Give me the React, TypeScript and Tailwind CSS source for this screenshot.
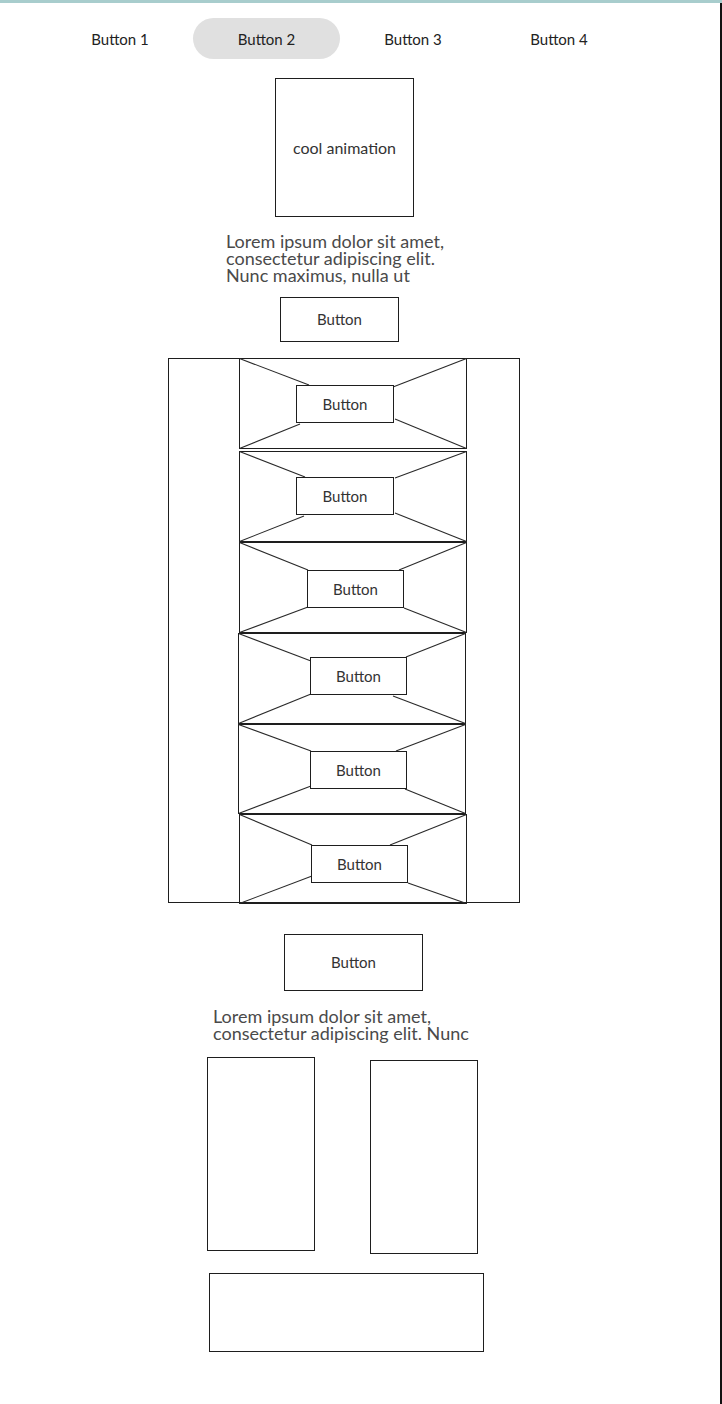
import React from "react";

type Pt = [number, number];
type PanelDef = {
  ml: number;
  mt: number;
  h: number;
  bx: number;
  by: number;
  bw: number;
  bh: number;
  lines: [Pt, Pt, Pt, Pt];
};

const W = 228;

const panels: PanelDef[] = [
  { ml: 70, mt: -1, h: 91, bx: 57, by: 27, bw: 98, bh: 38, lines: [[70, 27], [154, 29], [61, 66], [156, 61]] },
  { ml: 70, mt: 2, h: 91, bx: 57, by: 26, bw: 98, bh: 38, lines: [[66, 26], [156, 27], [65, 65], [156, 62]] },
  { ml: 70, mt: 0, h: 91, bx: 68, by: 28, bw: 97, bh: 38, lines: [[69, 28], [160, 28], [69, 65], [165, 66]] },
  { ml: 69, mt: 0, h: 91, bx: 72, by: 24, bw: 97, bh: 38, lines: [[73, 28], [168, 24], [73, 61], [155, 63]] },
  { ml: 69, mt: 0, h: 90, bx: 72, by: 27, bw: 97, bh: 38, lines: [[73, 27], [158, 27], [73, 62], [167, 65]] },
  { ml: 70, mt: 0, h: 90, bx: 72, by: 31, bw: 97, bh: 38, lines: [[73, 31], [151, 31], [73, 62], [169, 69]] },
];

function Panel({ p }: { p: PanelDef }) {
  const corners: Pt[] = [
    [0.5, 0.5],
    [W - 0.5, 0.5],
    [0.5, p.h - 0.5],
    [W - 0.5, p.h - 0.5],
  ];
  return (
    <div
      className="relative shrink-0 border border-[#1e1e1e] flex items-start"
      style={{ marginLeft: p.ml, marginTop: p.mt, width: W, height: p.h }}
    >
      <svg
        className="absolute left-[-1px] top-[-1px] pointer-events-none"
        width={W}
        height={p.h}
        viewBox={`0 0 ${W} ${p.h}`}
      >
        {p.lines.map((e, i) => (
          <line
            key={i}
            x1={corners[i][0]}
            y1={corners[i][1]}
            x2={e[0]}
            y2={e[1]}
            stroke="#2a2a2a"
            strokeWidth={1.1}
          />
        ))}
      </svg>
      <div
        className="relative bg-white border border-[#1e1e1e] flex items-center justify-center text-[15px] text-[#333]"
        style={{ marginLeft: p.bx - 1, marginTop: p.by - 1, width: p.bw, height: p.bh }}
      >
        Button
      </div>
    </div>
  );
}

export default function App() {
  const nav = ["Button 1", "Button 2", "Button 3", "Button 4"];
  return (
    <div className="min-h-[1404px] bg-white font-['Lato','Noto_Sans',sans-serif] text-[#333]">
      <div className="h-[3px] bg-[#a8cdcd]" />
      <div className="min-h-[1401px] border-r-2 border-[#111] flex flex-col items-start">
        <nav className="mt-[15px] ml-[47px] flex">
          {nav.map((n, i) => (
            <div
              key={n}
              className={
                i === 1
                  ? "w-[147px] h-[41px] pt-[2px] rounded-full bg-[#e0e0e0] flex items-center justify-center text-[15px] text-[#222]"
                  : "w-[146px] h-[41px] pt-[2px] flex items-center justify-center text-[15px] text-[#222]"
              }
            >
              {n}
            </div>
          ))}
        </nav>

        <div className="mt-[19px] ml-[275px] w-[139px] h-[139px] border border-[#1e1e1e] flex items-center justify-center text-[16px] text-[#333]">
          cool animation
        </div>

        <p className="mt-[16px] ml-[226px] w-[260px] text-[18px] leading-[17px] text-[#4a4a4a]">
          Lorem ipsum dolor sit amet,
          <br />
          consectetur adipiscing elit.
          <br />
          Nunc maximus, nulla ut
        </p>

        <div className="mt-[13px] ml-[280px] w-[119px] h-[45px] border border-[#1e1e1e] flex items-center justify-center text-[15px] text-[#333]">
          Button
        </div>

        <div className="mt-[16px] ml-[168px] w-[352px] h-[545px] border border-[#1e1e1e] flex flex-col items-start">
          {panels.map((p, i) => (
            <Panel key={i} p={p} />
          ))}
        </div>

        <div className="mt-[31px] ml-[284px] w-[139px] h-[57px] border border-[#1e1e1e] flex items-center justify-center text-[15px] text-[#333]">
          Button
        </div>

        <p className="mt-[17px] ml-[213px] w-[300px] text-[18px] leading-[17px] text-[#4a4a4a]">
          Lorem ipsum dolor sit amet,
          <br />
          consectetur adipiscing elit. Nunc
        </p>

        <div className="mt-[15px] ml-[207px] flex items-start">
          <div className="w-[108px] h-[194px] border border-[#1e1e1e]" />
          <div className="ml-[55px] mt-[3px] w-[108px] h-[194px] border border-[#1e1e1e]" />
        </div>

        <div className="mt-[19px] ml-[209px] w-[275px] h-[79px] border border-[#1e1e1e]" />
      </div>
    </div>
  );
}
